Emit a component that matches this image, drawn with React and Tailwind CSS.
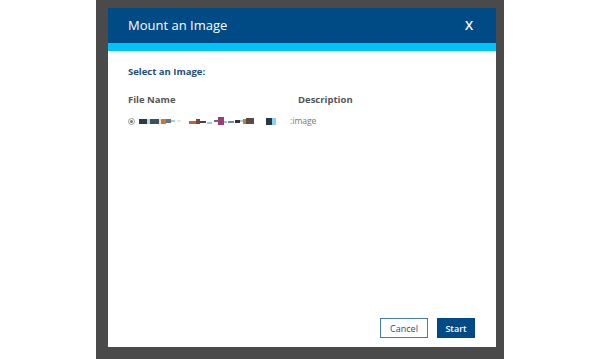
export default function App() {
  return (
    <div className="w-[600px] h-[359px] bg-white flex justify-center" style={{ fontFamily: '"Open Sans", "Noto Sans", sans-serif' }}>
      <div className="w-[408px] h-full bg-[#4a4a4a] pl-[12px] pr-[8px] pt-[8px] pb-[12px]">
        <div className="h-[339px] bg-white flex flex-col">
          <div className="h-[35px] bg-[#004a86] flex items-center justify-between pl-[20px] pr-[23px]">
            <span className="text-white text-[13px] leading-none">Mount an Image</span>
            <span className="text-white text-[13px] font-semibold leading-none">X</span>
          </div>
          <div className="h-[8px] bg-[#00c3f7]" />
          <div className="flex-1 flex flex-col px-[20px]">
            <div className="mt-[16px] text-[9.5px] font-bold text-[#1e4d7a] leading-none">Select an Image:</div>
            <div className="mt-[18px] flex text-[9.5px] font-bold text-[#555] leading-none">
              <span className="w-[170px]">File Name</span>
              <span>Description</span>
            </div>
            <div className="mt-[12px] flex items-center h-[10px]">
              <span className="w-[7px] h-[7px] rounded-full border border-[#999] bg-white flex items-center justify-center mr-[4px]">
                <span className="w-[3px] h-[3px] rounded-full bg-[#777]" />
              </span>
              <div className="flex items-center h-[8px]">
                <span className="w-[8px] h-[5px] bg-[#2b3a4a]" />
                <span className="w-[3px] h-[5px] bg-[#d0d0d0]" />
                <span className="w-[9px] h-[5px] bg-[#3d5066]" />
                <span className="w-[2px] h-[5px] bg-[#e2e2e2]" />
                <span className="w-[5px] h-[5px] bg-[#c87a35]" />
                <span className="w-[5px] h-[4px] bg-[#60748c]" />
                <span className="w-[4px] h-[2px] bg-[#a9c9e0]" />
                <span className="w-[4px] h-[2px] bg-[#f3e6c8] ml-[2px]" />
                <span className="w-[7px] h-[3px] bg-[#b8653a] ml-[8px] mt-[2px]" />
                <span className="w-[4px] h-[5px] bg-[#8a4030]" />
                <span className="w-[6px] h-[2px] bg-[#444] mt-[2px]" />
                <span className="w-[5px] h-[2px] bg-[#8ad0e6] ml-[1px] mt-[3px]" />
                <span className="w-[4px] h-[2px] bg-[#6a6a6a] ml-[2px]" />
                <span className="w-[6px] h-[8px] bg-[#9a3f70]" />
                <span className="w-[3px] h-[2px] bg-[#8ccbe0] mt-[2px]" />
                <span className="w-[6px] h-[2px] bg-[#6a8aa8] ml-[1px] mt-[2px]" />
                <span className="w-[5px] h-[3px] bg-[#333] ml-[1px]" />
                <span className="w-[3px] h-[2px] bg-[#a0d0e8]" />
                <span className="w-[3px] h-[5px] bg-[#c87a35]" />
                <span className="w-[8px] h-[6px] bg-[#5a4a48]" />
                <span className="w-[6px] h-[7px] bg-[#283848] ml-[12px]" />
                <span className="w-[4px] h-[7px] bg-[#8fd0f0]" />
              </div>
              <span className="ml-[14px] text-[8.5px] text-[#777] leading-none">:image</span>
            </div>
            <div className="flex-1" />
            <div className="flex justify-end gap-[9px] mb-[9px] mr-[1px]">
              <button className="w-[48px] h-[20px] border border-[#4a7c9e] bg-white text-[#1e4d7a] text-[9px] leading-none">Cancel</button>
              <button className="w-[38px] h-[20px] bg-[#004a86] text-white text-[9px] font-semibold leading-none">Start</button>
            </div>
          </div>
        </div>
      </div>
    </div>
  );
}
